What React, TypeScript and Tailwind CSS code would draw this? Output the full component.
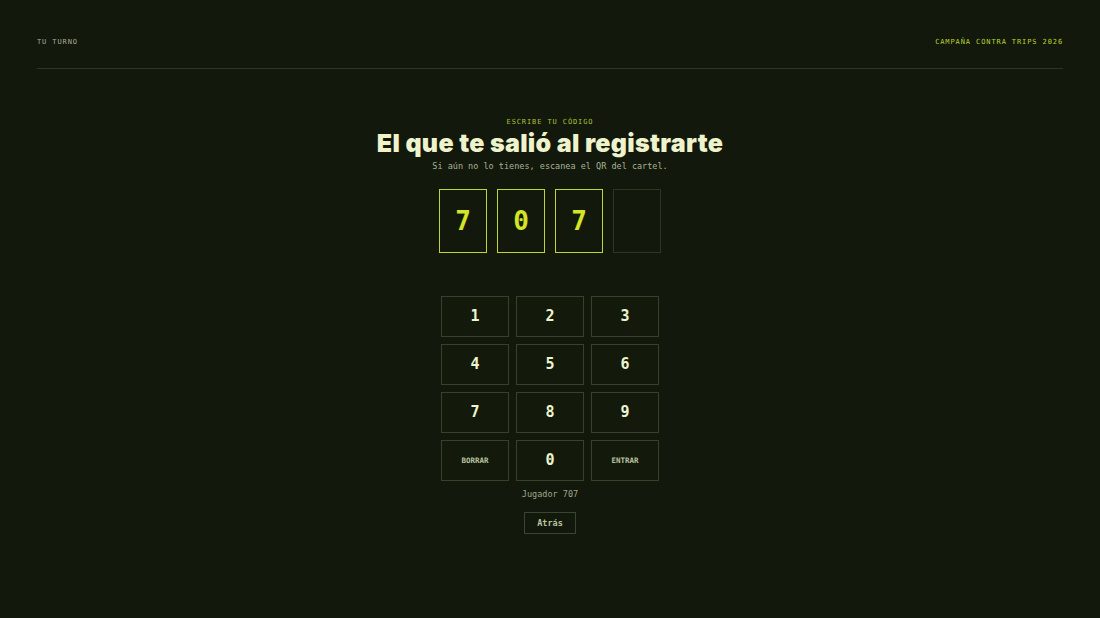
import * as React from 'react';

const mono = { fontFamily: '"DejaVu Sans Mono", "Liberation Mono", monospace' };

const CODE = ['7', '0', '7', ''];
const KEYS = ['1', '2', '3', '4', '5', '6', '7', '8', '9', 'BORRAR', '0', 'ENTRAR'];

function CodeBox({ value }: { value: string }) {
  const filled = value !== '';
  return (
    <div
      className={
        'w-[48px] h-[64px] flex items-center justify-center border ' +
        (filled ? 'border-[#bcd636]' : 'border-[#2c3722]')
      }
    >
      <span className="text-[26px] font-bold leading-none text-[#d2e526]" style={mono}>
        {value}
      </span>
    </div>
  );
}

function Key({ label }: { label: string }) {
  const word = label.length > 1;
  return (
    <button
      className="w-[68px] h-[41px] flex items-center justify-center border border-[#36422a] bg-[#131a0c]"
      style={mono}
    >
      <span
        className={
          word
            ? 'text-[7.5px] font-bold text-[#b9c3a0]'
            : 'text-[15px] font-bold text-[#eef3cf]'
        }
      >
        {label}
      </span>
    </button>
  );
}

export default function App() {
  return (
    <div className="w-[1100px] h-[618px] bg-[#12180b] overflow-hidden px-[37px]" style={mono}>
      <header className="flex justify-between items-center pt-[38px] pb-[22px] border-b border-[#2b3620]">
        <span className="text-[7px] leading-[8px] tracking-[0.9px] text-[#a9ad98]">TU TURNO</span>
        <span className="text-[7px] leading-[8px] tracking-[0.9px] text-[#b9d233]">
          CAMPAÑA CONTRA TRIPS 2026
        </span>
      </header>

      <main className="flex flex-col items-center">
        <span className="mt-[49px] text-[7px] leading-[8px] tracking-[0.9px] text-[#a9c03a]">
          ESCRIBE TU CÓDIGO
        </span>
        <h1
          className="mt-[3px] text-[25px] leading-[28px] font-black tracking-[0.3px] text-[#eef3cb]"
          style={{ fontFamily: 'Inter, "DejaVu Sans", sans-serif' }}
        >
          El que te salió al registrarte
        </h1>
        <p className="mt-[3px] text-[8.5px] leading-[12px] text-[#a9b294]">
          Si aún no lo tienes, escanea el QR del cartel.
        </p>

        <div className="mt-[17px] flex gap-[10px]">
          {CODE.map((c, i) => (
            <CodeBox key={i} value={c} />
          ))}
        </div>

        <div className="mt-[43px] grid grid-cols-3 gap-x-[7px] gap-y-[7px]">
          {KEYS.map((k) => (
            <Key key={k} label={k} />
          ))}
        </div>

        <span className="mt-[7px] text-[8.5px] leading-[12px] text-[#9ea88a]">Jugador 707</span>
        <button className="mt-[12px] w-[52px] h-[22px] flex items-center justify-center border border-[#3a4630] text-[8.5px] font-bold text-[#b9c3a0]">
          Atrás
        </button>
      </main>
    </div>
  );
}
